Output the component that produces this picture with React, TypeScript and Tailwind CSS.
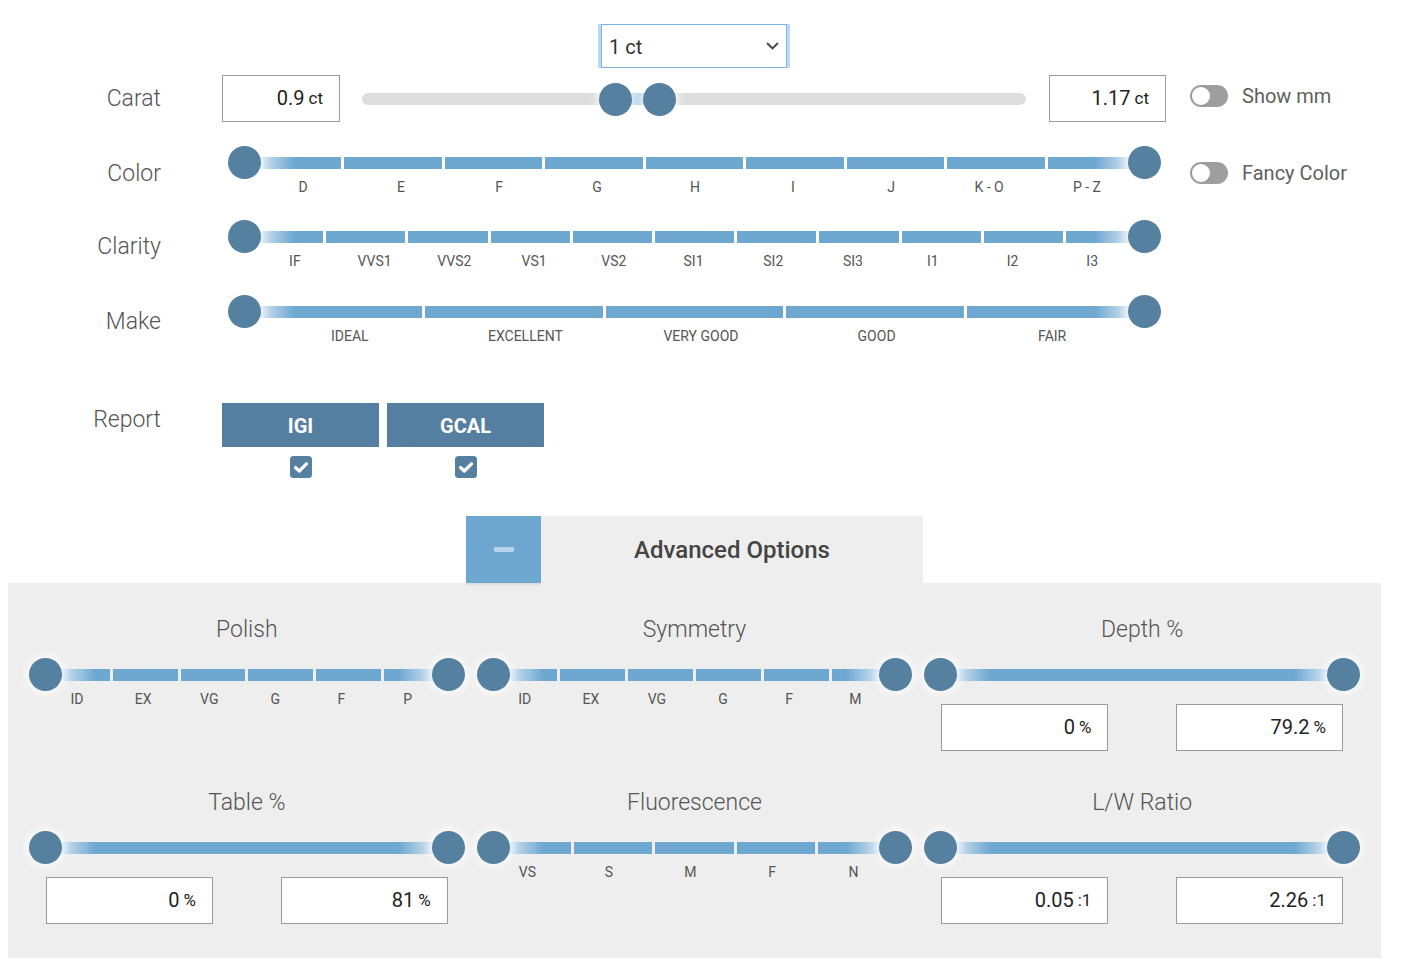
import React from "react";

function Thumb({ side }: { side: "left" | "right" }) {
  return (
    <div
      className={`absolute top-0 ${side === "left" ? "left-0" : "right-0"} w-[33px] h-[33px] rounded-full bg-[#55809f] shadow-[0_0_8px_3px_rgba(255,255,255,0.75)]`}
    />
  );
}

function SegSlider({ labels, lp }: { labels: string[]; lp: string }) {
  const n = labels.length;
  return (
    <div className="w-full">
      <div className="relative h-[33px]">
        <div className="mx-[16px] pt-[11px] flex gap-[3px]">
          {labels.map((_, i) => (
            <div
              key={i}
              className={`flex-1 h-[12px] ${
                i === 0
                  ? "bg-[linear-gradient(to_right,#cfe2f1_17px,#6ea8d1_50px)]"
                  : i === n - 1
                  ? "bg-[linear-gradient(to_left,#cfe2f1_17px,#6ea8d1_50px)]"
                  : "bg-[#6ea8d1]"
              }`}
            />
          ))}
        </div>
        <Thumb side="left" />
        <Thumb side="right" />
      </div>
      <div className={`flex ${lp}`}>
        {labels.map((l, i) => (
          <div key={i} className="flex-1 text-center text-[14px] leading-[16px] text-[#555] whitespace-nowrap">
            {l}
          </div>
        ))}
      </div>
    </div>
  );
}

function ContSlider() {
  return (
    <div className="relative h-[33px] w-full">
      <div className="mx-[16px] pt-[11px]">
        <div className="h-[12px] bg-[linear-gradient(to_right,#cfe2f1_17px,#6ea8d1_50px,#6ea8d1_calc(100%_-_50px),#cfe2f1_calc(100%_-_17px))]" />
      </div>
      <Thumb side="left" />
      <Thumb side="right" />
    </div>
  );
}

function ValueBox({ value, unit, w }: { value: string; unit: string; w: string }) {
  return (
    <div className={`${w} h-[47px] bg-white border border-[#9a9a9a] flex items-center justify-end pr-[16px] text-[#222]`}>
      <div className="flex items-baseline">
        <span className="text-[20px] leading-[24px]">{value}</span>
        <span className="text-[17px] leading-[24px] ml-[4px] relative -top-[1px]">{unit}</span>
      </div>
    </div>
  );
}

function Toggle() {
  return (
    <div className="w-[38px] h-[22px] rounded-full bg-[#9e9e9e] flex items-center">
      <div className="w-[18px] h-[18px] rounded-full bg-white ml-[2px]" />
    </div>
  );
}

function Check() {
  return (
    <svg width="22" height="22" viewBox="0 0 22 22">
      <rect x="0" y="0" width="22" height="22" rx="3.5" fill="#55809f" />
      <path d="M5.5 11.5 L9.3 15 L16.5 7.8" fill="none" stroke="#fff" strokeWidth="3.2" strokeLinecap="round" strokeLinejoin="round" />
    </svg>
  );
}

function RowLabel({ children, mt }: { children: React.ReactNode; mt: string }) {
  return (
    <div className={`w-[161px] shrink-0 text-right text-[23px] leading-[28px] font-light text-[#555] ${mt}`}>
      {children}
    </div>
  );
}

function PanelTitle({ children }: { children: React.ReactNode }) {
  return <div className="h-[27px] text-center text-[23px] leading-[27px] font-light text-[#555]">{children}</div>;
}

function InputPair({ a, b, unit }: { a: string; b: string; unit: string }) {
  return (
    <div className="mt-[13px] flex justify-between px-[17px]">
      <ValueBox value={a} unit={unit} w="w-[167px]" />
      <ValueBox value={b} unit={unit} w="w-[167px]" />
    </div>
  );
}

export default function App() {
  return (
    <div className="w-[1403px] h-[975px] bg-white font-['Roboto',sans-serif] overflow-hidden">
      {/* select */}
      <div className="pt-[24px] pl-[601px]">
        <div className="w-[186px] h-[44px] border border-[#80b4e6] shadow-[-3px_0_0_#bcd9f6,3px_0_0_#bcd9f6] bg-white flex items-center justify-between pl-[7px] pr-[7px]">
          <span className="text-[20px] text-[#333] relative top-[1px]">1 ct</span>
          <svg width="13" height="8" viewBox="0 0 13 8">
            <path d="M1 1 L6.5 6.5 L12 1" fill="none" stroke="#444" strokeWidth="1.8" />
          </svg>
        </div>
      </div>

      {/* Carat row */}
      <div className="mt-[7px] h-[47px] flex items-center">
        <RowLabel mt="">Carat</RowLabel>
        <div className="ml-[61px]">
          <ValueBox value="0.9" unit="ct" w="w-[118px]" />
        </div>
        <div className="ml-[22px] w-[664px] h-[12px] rounded-full bg-[#dddddd] relative">
          <div className="absolute left-[253px] w-[44px] top-0 h-[12px] bg-[#a6cbe6]" />
          <div className="absolute left-[237px] -top-[10px] w-[33px] h-[33px] rounded-full bg-[#55809f] shadow-[0_0_8px_3px_rgba(255,255,255,0.8)]" />
          <div className="absolute left-[281px] -top-[10px] w-[33px] h-[33px] rounded-full bg-[#55809f] shadow-[0_0_8px_3px_rgba(255,255,255,0.8)]" />
        </div>
        <div className="ml-[23px]">
          <ValueBox value="1.17" unit="ct" w="w-[117px]" />
        </div>
        <div className="ml-[24px] -mt-[6px] flex items-center">
          <Toggle />
          <span className="ml-[14px] text-[20px] text-[#5f5f5f]">Show mm</span>
        </div>
      </div>

      {/* Color row */}
      <div className="mt-[24px] h-[74px] flex items-start">
        <RowLabel mt="mt-[14px]">Color</RowLabel>
        <div className="ml-[67px] w-[933px]">
          <SegSlider lp="pl-[26px] pr-[25px]" labels={["D", "E", "F", "G", "H", "I", "J", "K - O", "P - Z"]} />
        </div>
        <div className="ml-[29px] mt-[12px] flex items-center">
          <Toggle />
          <span className="ml-[14px] text-[20px] text-[#5f5f5f]">Fancy Color</span>
        </div>
      </div>

      {/* Clarity row */}
      <div className="h-[75px] flex items-start">
        <RowLabel mt="mt-[13px]">Clarity</RowLabel>
        <div className="ml-[67px] w-[933px]">
          <SegSlider lp="pl-[27px] pr-[29px]" labels={["IF", "VVS1", "VVS2", "VS1", "VS2", "SI1", "SI2", "SI3", "I1", "I2", "I3"]} />
        </div>
      </div>

      {/* Make row */}
      <div className="h-[49px] flex items-start">
        <RowLabel mt="mt-[13px]">Make</RowLabel>
        <div className="ml-[67px] w-[933px]">
          <SegSlider lp="pl-[34px] pr-[21px]" labels={["IDEAL", "EXCELLENT", "VERY GOOD", "GOOD", "FAIR"]} />
        </div>
      </div>

      {/* Report */}
      <div className="mt-[59px] flex items-start">
        <RowLabel mt="mt-[3px]">Report</RowLabel>
        <div className="ml-[61px] flex gap-[8px]">
          {["IGI", "GCAL"].map((r) => (
            <div key={r} className="w-[157px] flex flex-col items-center">
              <div className="w-full h-[44px] bg-[#547fa0] text-white text-[20px] font-bold flex items-center justify-center">
                <span className="relative top-[1px]">{r}</span>
              </div>
              <div className="mt-[9px] h-[22px]">
                <Check />
              </div>
            </div>
          ))}
        </div>
      </div>

      {/* Advanced tab */}
      <div className="mt-[38px] ml-[466px] w-[457px] h-[67px] flex">
        <div className="w-[75px] h-full bg-[#6ea8d1] flex items-center justify-center shadow-[0_2px_2px_rgba(0,0,0,0.08)]">
          <div className="w-[20px] h-[5px] rounded-[1px] bg-[#b5d4ec]" />
        </div>
        <div className="flex-1 h-full bg-[#eeeeee] flex items-center justify-center text-[24px] font-medium text-[#444]">
          Advanced Options
        </div>
      </div>

      {/* Panel */}
      <div className="ml-[8px] w-[1373px] bg-[#eeeeee] pt-[33px] pb-[34px] px-[21px] grid grid-cols-3 gap-x-[12px] gap-y-[38px]">
        <div>
          <PanelTitle>Polish</PanelTitle>
          <div className="mt-[15px]">
            <SegSlider lp="pl-[15px] pr-[24px]" labels={["ID", "EX", "VG", "G", "F", "P"]} />
          </div>
        </div>
        <div>
          <PanelTitle>Symmetry</PanelTitle>
          <div className="mt-[15px]">
            <SegSlider lp="pl-[15px] pr-[24px]" labels={["ID", "EX", "VG", "G", "F", "M"]} />
          </div>
        </div>
        <div>
          <PanelTitle>Depth %</PanelTitle>
          <div className="mt-[15px]">
            <ContSlider />
          </div>
          <InputPair a="0" b="79.2" unit="%" />
        </div>
        <div>
          <PanelTitle>Table %</PanelTitle>
          <div className="mt-[15px]">
            <ContSlider />
          </div>
          <InputPair a="0" b="81" unit="%" />
        </div>
        <div>
          <PanelTitle>Fluorescence</PanelTitle>
          <div className="mt-[15px]">
            <SegSlider lp="pl-[10px] pr-[18px]" labels={["VS", "S", "M", "F", "N"]} />
          </div>
        </div>
        <div>
          <PanelTitle>L/W Ratio</PanelTitle>
          <div className="mt-[15px]">
            <ContSlider />
          </div>
          <InputPair a="0.05" b="2.26" unit=":1" />
        </div>
      </div>
    </div>
  );
}
